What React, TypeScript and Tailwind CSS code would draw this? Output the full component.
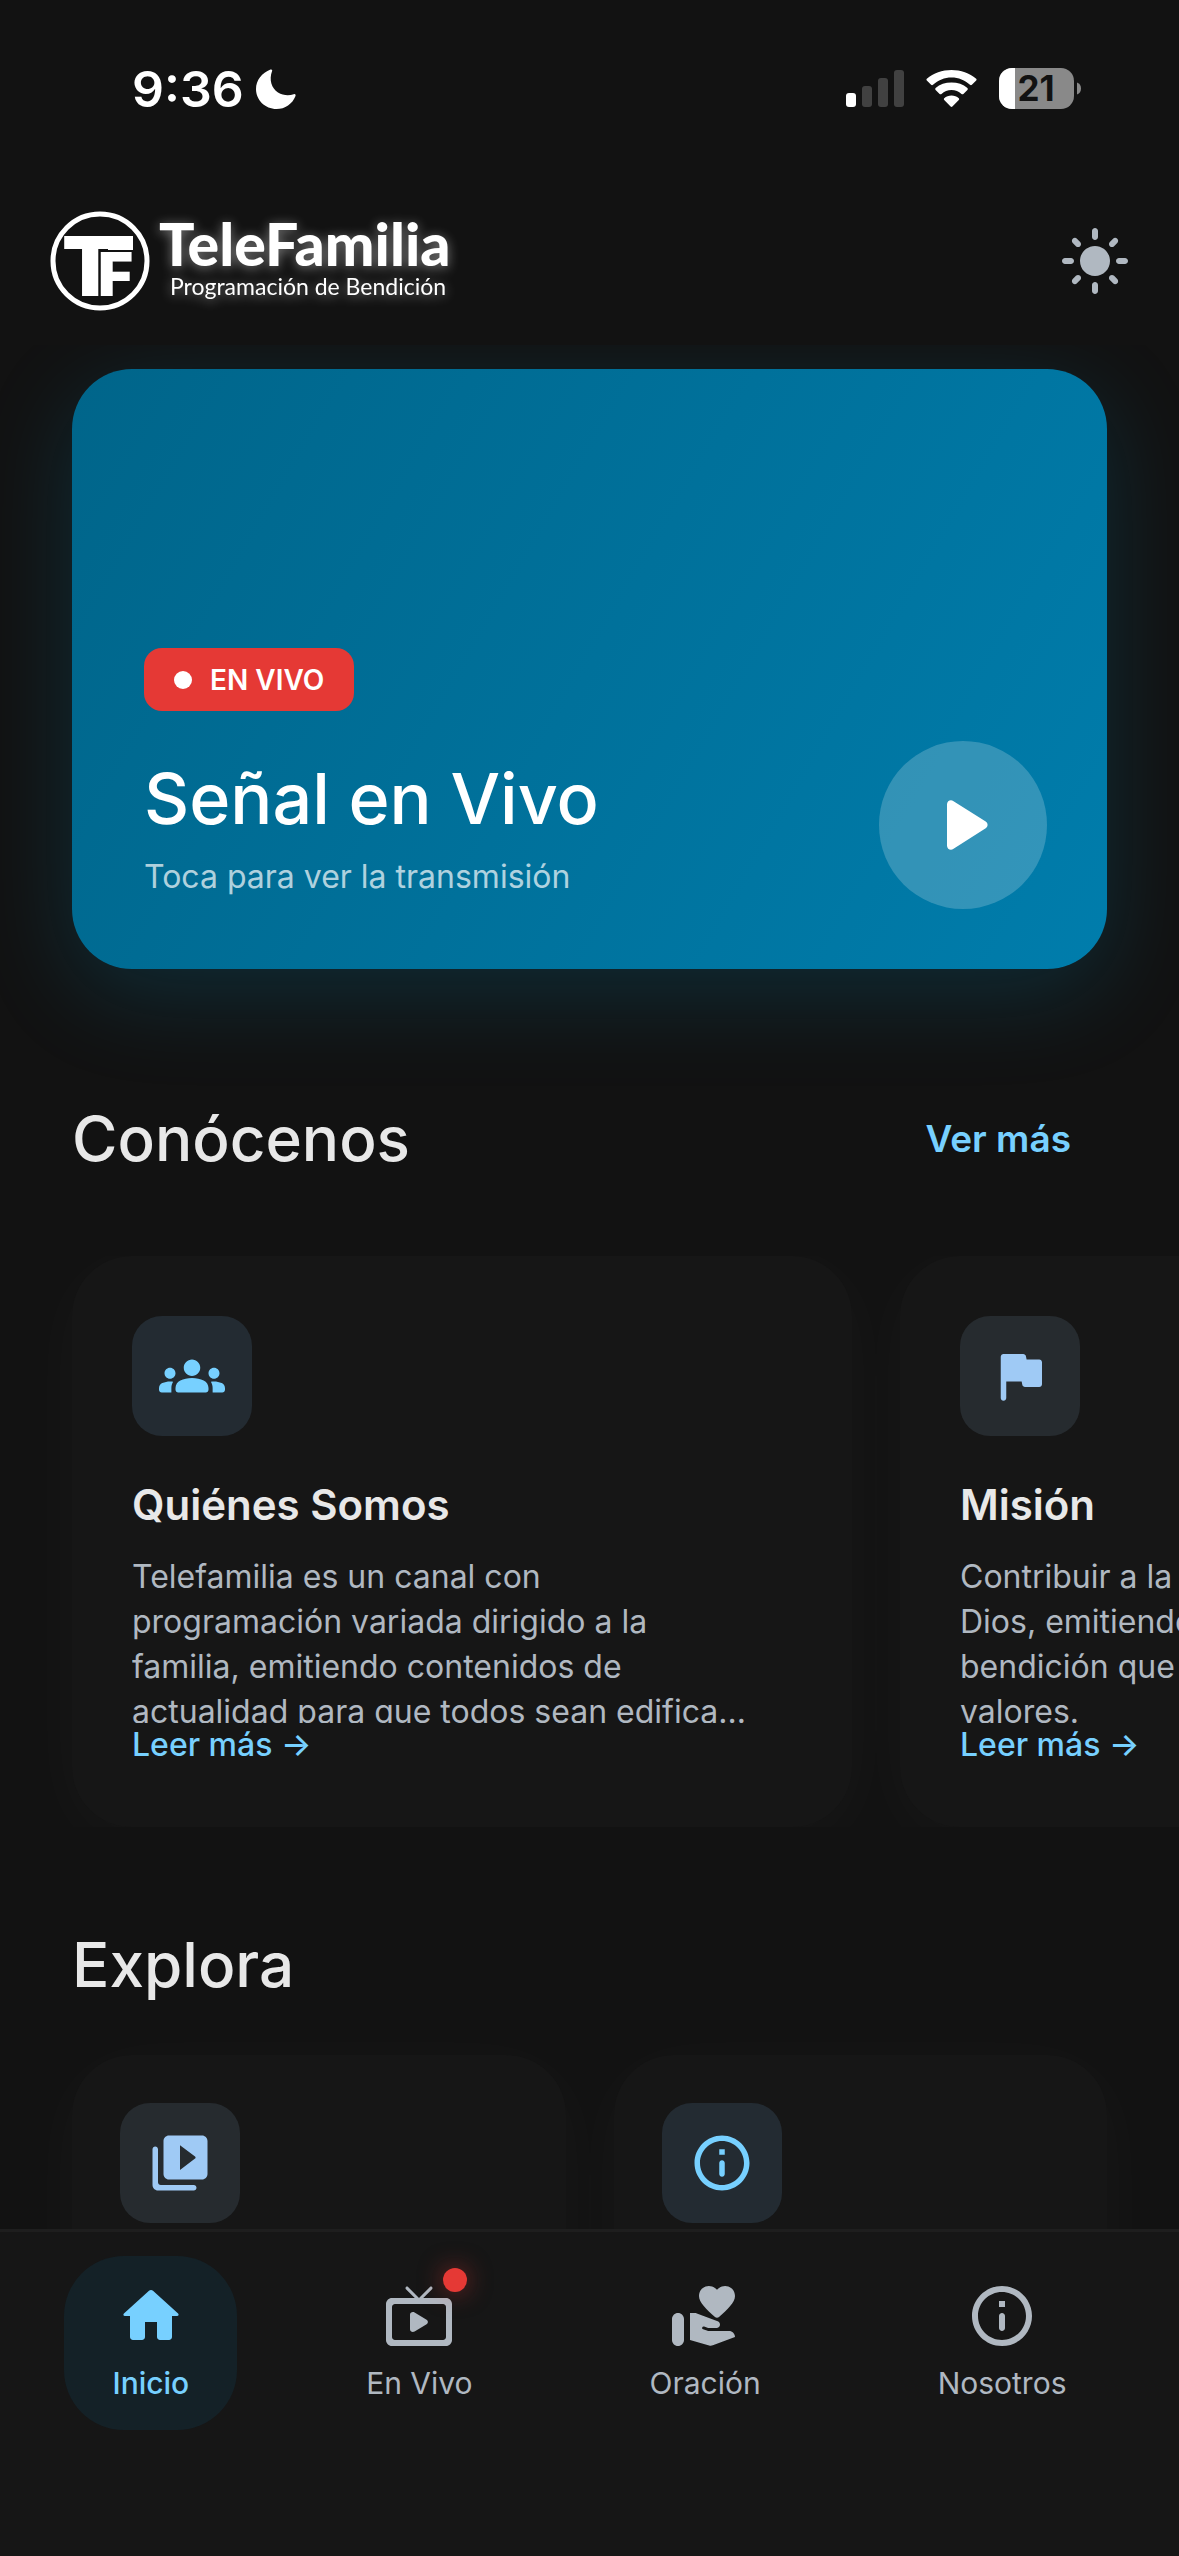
import type { ReactNode } from "react";
import clsx from "clsx";

const icons = {
  sun: "M12 7c-2.76 0-5 2.24-5 5s2.24 5 5 5 5-2.24 5-5-2.24-5-5-5zM2 13h2c.55 0 1-.45 1-1s-.45-1-1-1H2c-.55 0-1 .45-1 1s.45 1 1 1zm18 0h2c.55 0 1-.45 1-1s-.45-1-1-1h-2c-.55 0-1 .45-1 1s.45 1 1 1zM11 2v2c0 .55.45 1 1 1s1-.45 1-1V2c0-.55-.45-1-1-1s-1 .45-1 1zm0 18v2c0 .55.45 1 1 1s1-.45 1-1v-2c0-.55-.45-1-1-1s-1 .45-1 1zM5.99 4.58c-.39-.39-1.03-.39-1.41 0-.39.39-.39 1.03 0 1.41l1.06 1.06c.39.39 1.03.39 1.41 0s.39-1.03 0-1.41L5.99 4.58zm12.37 12.37c-.39-.39-1.03-.39-1.41 0-.39.39-.39 1.03 0 1.41l1.06 1.06c.39.39 1.03.39 1.41 0 .39-.39.39-1.03 0-1.41l-1.06-1.06zm1.06-10.96c.39-.39.39-1.03 0-1.41-.39-.39-1.03-.39-1.41 0l-1.06 1.06c-.39.39-.39 1.03 0 1.41s1.03.39 1.41 0l1.06-1.06zM7.05 18.36c.39-.39.39-1.03 0-1.41-.39-.39-1.03-.39-1.41 0l-1.06 1.06c-.39.39-.39 1.03 0 1.41s1.03.39 1.41 0l1.06-1.06z",
  play: "M8 6.82v10.36c0 .79.87 1.27 1.54.84l8.14-5.18c.62-.39.62-1.29 0-1.69L9.54 5.98C8.87 5.55 8 6.03 8 6.82z",
  groups:
    "M12 12.75c1.63 0 3.07.39 4.24.9 1.08.48 1.76 1.56 1.76 2.73V17c0 .55-.45 1-1 1H7c-.55 0-1-.45-1-1v-.61c0-1.18.68-2.26 1.76-2.73 1.17-.52 2.61-.91 4.24-.91zM4 13c1.1 0 2-.9 2-2s-.9-2-2-2-2 .9-2 2 .9 2 2 2zm1.13 1.1c-.37-.06-.74-.1-1.13-.1-.99 0-1.93.21-2.78.58C.48 14.9 0 15.62 0 16.43V17c0 .55.45 1 1 1h3.5v-1.61c0-.83.23-1.61.63-2.29zM20 13c1.1 0 2-.9 2-2s-.9-2-2-2-2 .9-2 2 .9 2 2 2zm4 3.43c0-.81-.48-1.53-1.22-1.85-.85-.37-1.79-.58-2.78-.58-.39 0-.76.04-1.13.1.4.68.63 1.46.63 2.29V18H23c.55 0 1-.45 1-1v-.57zM12 6c1.66 0 3 1.34 3 3s-1.34 3-3 3-3-1.34-3-3 1.34-3 3-3z",
  flag: "M14.4 6l-.24-1.2c-.09-.46-.5-.8-.98-.8H6c-.55 0-1 .45-1 1v15c0 .55.45 1 1 1s1-.45 1-1v-6h5.6l.24 1.2c.09.47.5.8.98.8H19c.55 0 1-.45 1-1V7c0-.55-.45-1-1-1h-4.6z",
  library:
    "M3 6c-.55 0-1 .45-1 1v13c0 1.1.9 2 2 2h13c.55 0 1-.45 1-1s-.45-1-1-1H5c-.55 0-1-.45-1-1V7c0-.55-.45-1-1-1zm17-4H8c-1.1 0-2 .9-2 2v12c0 1.1.9 2 2 2h12c1.1 0 2-.9 2-2V4c0-1.1-.9-2-2-2zm-8 12.5v-9l5.47 4.1c.27.2.27.6 0 .8L12 14.5z",
  info: "M11 7h2v2h-2zm1 10c.55 0 1-.45 1-1v-4c0-.55-.45-1-1-1s-1 .45-1 1v4c0 .55.45 1 1 1zm0-15C6.48 2 2 6.48 2 12s4.48 10 10 10 10-4.48 10-10S17.52 2 12 2zm0 18c-4.41 0-8-3.59-8-8s3.59-8 8-8 8 3.59 8 8-3.59 8-8 8z",
  home: "M10 19v-5h4v5c0 .55.45 1 1 1h3c.55 0 1-.45 1-1v-7h1.7c.46 0 .68-.57.33-.87L12.67 3.6c-.38-.34-.96-.34-1.34 0l-8.36 7.53c-.34.3-.13.87.33.87H5v7c0 .55.45 1 1 1h3c.55 0 1-.45 1-1z",
  tv: "M21 6h-7.59l2.94-2.94c.2-.2.2-.51 0-.71s-.51-.2-.71 0L12 5.99 8.36 2.35c-.2-.2-.51-.2-.71 0s-.2.51 0 .71L10.59 6H3c-1.1 0-2 .89-2 2v12c0 1.1.9 2 2 2h18c1.1 0 2-.9 2-2V8c0-1.11-.9-2-2-2zm-1 14H4c-.55 0-1-.45-1-1V9c0-.55.45-1 1-1h16c.55 0 1 .45 1 1v10c0 .55-.45 1-1 1zM9 11.6v4.8c0 .8.86 1.15 1.53.77l4-2.4c.6-.35.6-1.19 0-1.54l-4-2.4C9.86 10.45 9 10.8 9 11.6z",
  giving:
    "M3 11c-1.1 0-2 .9-2 2v7c0 1.1.9 2 2 2s2-.9 2-2v-7c0-1.1-.9-2-2-2zM16 3.25C16.65 2.49 17.66 2 18.7 2 20.55 2 22 3.45 22 5.3c0 2.1-2.5 4.5-5.33 7.06-.38.34-.96.34-1.34 0C12.5 9.8 10 7.4 10 5.3 10 3.45 11.45 2 13.3 2c1.04 0 2.05.49 2.7 1.25zM20 17h-6.83c-.11 0-.22-.02-.33-.06l-1.47-.51c-.26-.09-.39-.37-.3-.63.09-.26.38-.4.64-.3l1.12.43c.11.04.24.07.36.07h2.63c.65 0 1.18-.53 1.18-1.18 0-.49-.31-.93-.77-1.11L9.3 11.13c-.22-.09-.46-.13-.7-.13H7v9.02l6.37 1.81c.41.12.85.1 1.25-.05L22 19c0-1.1-.89-2-2-2z",
};

type IconName = keyof typeof icons;

function Icon({ name, className }: { name: IconName; className?: string }) {
  return (
    <svg viewBox="0 0 24 24" fill="currentColor" className={clsx("shrink-0", className)} aria-hidden="true">
      <path fillRule="evenodd" d={icons[name]} />
    </svg>
  );
}

const about: { icon: IconName; tone: "sky" | "soft"; title: string; lines: string[] }[] = [
  {
    icon: "groups",
    tone: "sky",
    title: "Quiénes Somos",
    lines: [
      "Telefamilia es un canal con",
      "programación variada dirigido a la",
      "familia, emitiendo contenidos de",
      "actualidad para que todos sean edifica...",
    ],
  },
  {
    icon: "flag",
    tone: "soft",
    title: "Misión",
    lines: ["Contribuir a la obra de", "Dios, emitiendo mensajes de", "bendición que promuevan", "valores."],
  },
];

const tabs: { icon: IconName; label: string; live?: boolean }[] = [
  { icon: "home", label: "Inicio" },
  { icon: "tv", label: "En Vivo", live: true },
  { icon: "giving", label: "Oración" },
  { icon: "info", label: "Nosotros" },
];

function StatusBar() {
  return (
    <div className="flex h-[177px] shrink-0 items-center justify-between pr-[98px] pl-[132px] text-white">
      <div className="flex items-center gap-3">
        <span className="text-[50px] leading-none font-semibold">9:36</span>
        <svg viewBox="0 0 40 40" className="size-10" fill="currentColor" aria-hidden="true">
          <path d="M14.5 0.6C15.6 0 16.6 0.9 16.1 2.1C12.8 11 15.6 19.5 22 23.5C27 26.6 33 27 37.7 25.2C39 24.7 40 25.7 39.5 26.9C36.5 34.8 29 40 20.5 40C9.2 40 0 31.2 0 20C0 11.5 6 3.8 14.5 0.6Z" />
        </svg>
      </div>
      <div className="flex items-center gap-[22px]">
        <svg viewBox="0 0 58 37" className="h-[37px] w-[58px]" fill="currentColor" aria-hidden="true">
          <rect x="0" y="23" width="10" height="14" rx="3" />
          <rect x="16" y="16" width="10" height="21" rx="3" opacity=".2" />
          <rect x="32" y="8" width="10" height="29" rx="3" opacity=".2" />
          <rect x="48" y="0" width="10" height="37" rx="3" opacity=".2" />
        </svg>
        <svg viewBox="0 0 51 37" className="h-[37px] w-[51px]" fill="currentColor" aria-hidden="true">
          <path d="M25.5 7.5C32.5 7.5 39 10.2 44 14.8C44.6 15.4 45.3 15.4 45.9 14.8L50.2 10.5C50.7 10 50.7 9.3 50.2 8.8C43.5 3.2 34.8 0 25.5 0C16.2 0 7.5 3.2 0.8 8.8C0.3 9.3 0.3 10 0.8 10.5L5.1 14.8C5.7 15.4 6.4 15.4 7 14.8C12 10.2 18.5 7.5 25.5 7.5Z" />
          <path d="M25.5 20C29.3 20 32.8 21.5 35.5 23.9C36.1 24.5 36.8 24.5 37.4 23.9L41.4 19.9C41.9 19.4 41.9 18.6 41.4 18.1C37.2 14.3 31.6 12.5 25.5 12.5C19.4 12.5 13.8 14.3 9.6 18.1C9.1 18.6 9.1 19.4 9.6 19.9L13.6 23.9C14.2 24.5 14.9 24.5 15.5 23.9C18.2 21.5 21.7 20 25.5 20Z" />
          <path d="M32.8 28.3C33.3 28.8 33.3 29.5 32.8 30L26.4 36.5C25.9 37 25.1 37 24.6 36.5L18.2 30C17.7 29.5 17.7 28.8 18.2 28.3C20.2 26.6 22.7 25.6 25.5 25.6C28.3 25.6 30.8 26.6 32.8 28.3Z" />
        </svg>
        <svg viewBox="0 0 82 41" className="h-[41px] w-[82px]" role="img" aria-label="Batería 21">
          <clipPath id="battery">
            <rect width="75" height="41" rx="13" />
          </clipPath>
          <g clipPath="url(#battery)">
            <rect width="75" height="41" fill="#898989" />
            <rect width="16" height="41" fill="#fff" />
          </g>
          <path d="M78 14.5C80.8 15.5 82 17.8 82 20.5C82 23.2 80.8 25.5 78 26.5Z" fill="#898989" />
          <text x="37" y="33" textAnchor="middle" fill="#121212" className="text-[35px] font-bold">
            21
          </text>
        </svg>
      </div>
    </div>
  );
}

function Logo() {
  return (
    <svg
      viewBox="0 0 420 104"
      className="h-[104px] w-[420px] overflow-visible"
      fill="#fff"
      role="img"
      aria-label="TeleFamilia, Programación de Bendición"
    >
      <circle cx="52" cy="52" r="47" fill="none" stroke="#fff" strokeWidth="5" />
      <text x="14" y="87" className="text-[82px] font-black">
        T
      </text>
      <rect x="60" y="27" width="25" height="14" />
      <text x="50" y="87" className="text-[60px] font-black" stroke="#121212" strokeWidth="2" paintOrder="stroke">
        F
      </text>
      <g className="font-[Lato,sans-serif] drop-shadow-[0_2px_6px_rgba(255,255,255,0.45)]">
        <text x="111" y="57" className="text-[59px] font-black">
          TeleFamilia
        </text>
        <text x="122" y="86" className="text-[23px]">
          Programación de Bendición
        </text>
      </g>
    </svg>
  );
}

function IconTile({ name, tone }: { name: IconName; tone: "sky" | "soft" }) {
  return (
    <div
      className={clsx(
        "flex size-30 shrink-0 items-center justify-center rounded-[30px]",
        tone === "sky" ? "bg-[#232b32] text-[#77d0ff]" : "bg-[#262b2f] text-[#9fcaf5]",
      )}
    >
      <Icon name={name} className="size-[66px]" />
    </div>
  );
}

function SectionTitle({ children }: { children: ReactNode }) {
  return <h2 className="text-[62px] leading-[84px] font-medium text-[#e8e8e8]">{children}</h2>;
}

export default function App() {
  return (
    <div className="flex h-screen flex-col overflow-hidden bg-[#121212] font-[Inter,sans-serif]">
      <StatusBar />

      <header className="flex h-42 shrink-0 items-center justify-between px-12">
        <Logo />
        <button aria-label="Cambiar tema" className="text-[#b0b8c1]">
          <Icon name="sun" className="size-18" />
        </button>
      </header>

      <main className="min-h-0 flex-1 overflow-hidden pt-6">
        <a
          href="#en-vivo"
          className="mx-18 flex h-[600px] items-end justify-between rounded-[60px] bg-linear-[120deg] from-[#00658a] to-[#007dac] pr-15 pb-15 pl-18 text-white shadow-[0_24px_96px_rgba(0,150,200,0.2)]"
        >
          <div className="pb-2">
            <span className="inline-flex h-[63px] items-center gap-[18px] rounded-[18px] bg-[#e53935] px-[30px] text-[28px] font-semibold">
              <span className="size-[18px] rounded-full bg-white" />
              EN VIVO
            </span>
            <h1 className="mt-11 text-[70px] leading-[88px] font-medium">Señal en Vivo</h1>
            <p className="mt-2.5 text-[32px] leading-[48px] text-white/70">Toca para ver la transmisión</p>
          </div>
          <span className="flex size-42 items-center justify-center rounded-full bg-white/20">
            <Icon name="play" className="size-24" />
          </span>
        </a>

        <section>
          <div className="mx-18 mt-32 flex items-center justify-between">
            <SectionTitle>Conócenos</SectionTitle>
            <button className="px-9 text-[37px] font-semibold text-[#77d0ff]">Ver más</button>
          </div>
          <div className="mt-[75px] flex gap-12 overflow-hidden px-18">
            {about.map(({ icon, tone, title, lines }) => (
              <article
                key={title}
                className="flex h-[571px] w-[780px] shrink-0 flex-col items-start rounded-[60px] bg-[#161616] p-15 shadow-[0_12px_72px_rgba(255,255,255,0.03)]"
              >
                <IconTile name={icon} tone={tone} />
                <h3 className="mt-9 text-[42px] leading-[66px] font-semibold text-[#e8e8e8]">{title}</h3>
                <p className="mt-4 min-h-0 flex-1 overflow-hidden text-[32px] leading-[45px] whitespace-pre text-[#b0b8c1]">
                  {lines.join("\n")}
                </p>
                <button className="text-[32px] leading-[44px] font-medium text-[#77d0ff]">Leer más →</button>
              </article>
            ))}
          </div>
        </section>

        <section className="mx-18 mt-24">
          <SectionTitle>Explora</SectionTitle>
          <div className="mt-12 grid grid-cols-2 gap-12">
            <div className="h-96 rounded-[60px] bg-[#161616] p-12 shadow-[0_12px_72px_rgba(255,255,255,0.03)]">
              <IconTile name="library" tone="soft" />
            </div>
            <div className="h-96 rounded-[60px] bg-[#161616] p-12 shadow-[0_12px_72px_rgba(255,255,255,0.03)]">
              <IconTile name="info" tone="sky" />
            </div>
          </div>
        </section>
      </main>

      <nav className="flex shrink-0 justify-around border-t-3 border-[#1e1e1e] bg-[#161616] px-6 pt-6 pb-[126px]">
        {tabs.map(({ icon, label, live }, i) => (
          <a
            key={label}
            href={`#${label}`}
            aria-current={i === 0 ? "page" : undefined}
            className={clsx(
              "flex h-[174px] flex-col items-center rounded-[60px] px-12 pt-6 text-[30px] leading-[62px]",
              i === 0 ? "bg-[#142127] font-medium text-[#77d0ff]" : "text-[#b0b8c1]",
            )}
          >
            <span className="relative">
              <Icon name={icon} className="size-18" />
              {live && (
                <span className="absolute -top-3 -right-3 size-6 rounded-full bg-[#e53935] shadow-[0_0_24px_rgba(229,57,53,0.5)]" />
              )}
            </span>
            {label}
          </a>
        ))}
      </nav>
    </div>
  );
}
